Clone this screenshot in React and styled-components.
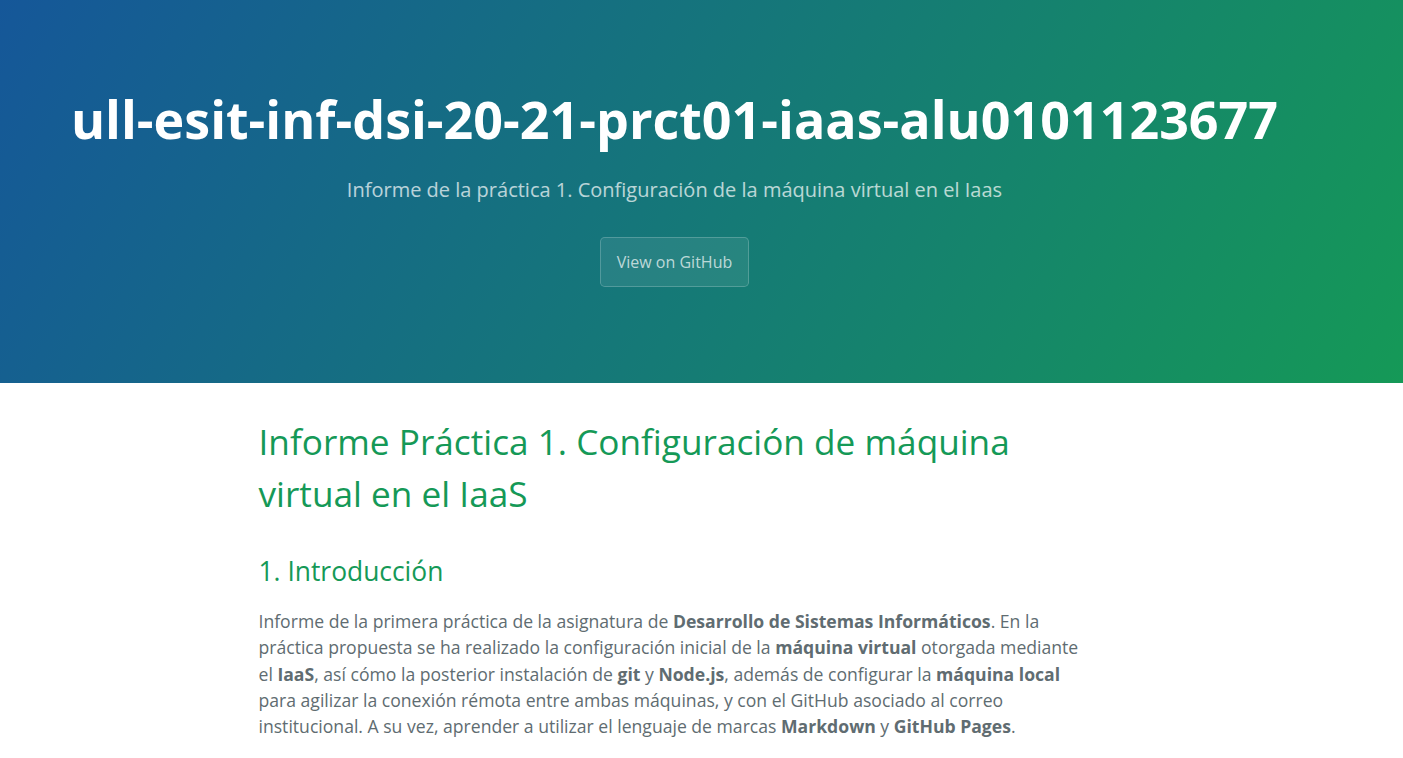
import React from "react";
import styled, { createGlobalStyle } from "styled-components";

const Global = createGlobalStyle`
  * { box-sizing: border-box; }
  html, body { margin: 0; padding: 0; }
  body {
    font-family: "Open Sans", "Helvetica Neue", Helvetica, Arial, sans-serif;
    font-size: 16px;
    line-height: 1.5;
    color: #606c71;
    background: #fff;
  }
`;

const OFFSET = 54;

const PageHeader = styled.section`
  color: #fff;
  text-align: center;
  background-color: #159957;
  background-image: linear-gradient(120deg, #155799, #159957);
  padding: 5rem calc(2rem + ${OFFSET}px) 5rem 2rem;
`;

const ProjectName = styled.h1`
  font-size: 3.25rem;
  font-weight: 700;
  line-height: 1.5;
  margin: 0 0 0.1rem;
`;

const Tagline = styled.h2`
  font-size: 1.25rem;
  font-weight: normal;
  line-height: 1.5;
  margin: 0.83em 0 2rem;
  opacity: 0.7;
`;

const Btn = styled.a`
  display: inline-block;
  margin-bottom: 1rem;
  padding: 0.75rem 1rem;
  color: rgba(255, 255, 255, 0.7);
  background-color: rgba(255, 255, 255, 0.08);
  border: 1px solid rgba(255, 255, 255, 0.2);
  border-radius: 0.3rem;
  font-size: 1rem;
  line-height: 1.5;
  text-decoration: none;
`;

const MainWrap = styled.div`
  padding-right: ${OFFSET}px;
`;

const Main = styled.section`
  max-width: 64rem;
  margin: 0 auto;
  padding: 2rem 6rem;
  font-size: 1.1rem;
  word-wrap: break-word;
`;

const H1 = styled.h1`
  font-size: 2em;
  font-weight: normal;
  color: #159957;
  line-height: 1.5;
  margin: 0 0 1rem;
`;

const H2 = styled.h2`
  font-size: 1.5em;
  font-weight: normal;
  color: #159957;
  line-height: 1.5;
  margin: 2rem 0 1rem;
`;

const P = styled.p`
  margin: 0 0 1rem;
  line-height: 1.5;
`;

export default function App() {
  return (
    <>
      <Global />
      <PageHeader>
        <ProjectName>ull-esit-inf-dsi-20-21-prct01-iaas-alu0101123677</ProjectName>
        <Tagline>Informe de la práctica 1. Configuración de la máquina virtual en el Iaas</Tagline>
        <Btn href="#">View on GitHub</Btn>
      </PageHeader>
      <MainWrap>
        <Main>
          <H1>Informe Práctica 1. Configuración de máquina virtual en el IaaS</H1>
          <H2>1. Introducción</H2>
          <P>
            Informe de la primera práctica de la asignatura de <strong>Desarrollo de Sistemas Informáticos</strong>. En la
            práctica propuesta se ha realizado la configuración inicial de la <strong>máquina virtual</strong> otorgada mediante
            el <strong>IaaS</strong>, así cómo la posterior instalación de <strong>git</strong> y <strong>Node.js</strong>, además de configurar la <strong>máquina local</strong> para
            agilizar la conexión rémota entre ambas máquinas, y con el GitHub asociado al correo institucional. A su vez,
            aprender a utilizar el lenguaje de marcas <strong>Markdown</strong> y <strong>GitHub Pages</strong>.
          </P>
        </Main>
      </MainWrap>
    </>
  );
}
